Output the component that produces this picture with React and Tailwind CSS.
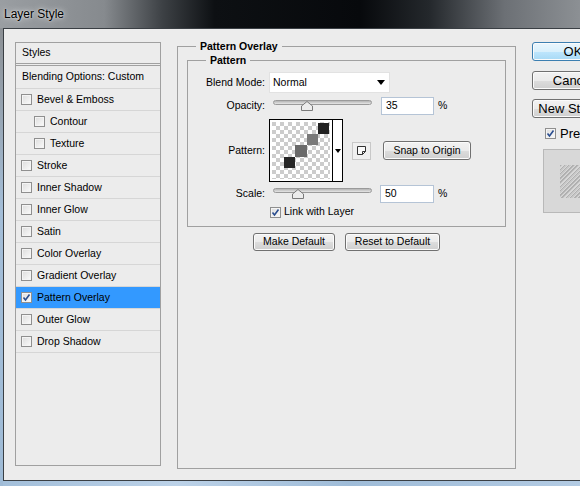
import React from 'react';

const styleRows = [
    { label: 'Bevel & Emboss' },
    { label: 'Contour', indent: true },
    { label: 'Texture', indent: true },
    { label: 'Stroke' },
    { label: 'Inner Shadow' },
    { label: 'Inner Glow' },
    { label: 'Satin' },
    { label: 'Color Overlay' },
    { label: 'Gradient Overlay' },
    { label: 'Pattern Overlay', checked: true, active: true },
    { label: 'Outer Glow' },
    { label: 'Drop Shadow' },
];

function Checkbox({ checked }) {
    return (
        <span className="w-[11px] h-[11px] shrink-0 border border-[#8f8f8f] bg-[linear-gradient(135deg,#dcdcdc,#fbfbfb)] shadow-[inset_0_0_0_1px_#f4f4f4] flex items-center justify-center">
            {checked && (
                <svg width="9" height="9" viewBox="0 0 9 9">
                    <path d="M1.5 4.5 L3.5 7 L7.5 1.5" fill="none" stroke="#2a4d8f" strokeWidth="1.6" />
                </svg>
            )}
        </span>
    );
}

function Button({ children, className = '', primary }) {
    return (
        <div
            className={`flex items-center justify-center rounded-[3px] border ${primary
                ? 'border-[#3c7fb1] bg-[linear-gradient(#eaf6fd_0%,#d9f0fc_50%,#bee6fd_51%,#a7d9f5_100%)]'
                : 'border-[#707070] bg-[linear-gradient(#f2f2f2_0%,#ebebeb_50%,#dddddd_51%,#cfcfcf_100%)]'
                } shadow-[inset_0_0_0_1px_#fbfbfb] ${className}`}
        >
            {children}
        </div>
    );
}

function Slider({ thumb }) {
    return (
        <div className="relative w-[99px] h-[18px] ml-[4px]">
            <div className="mt-[3px] h-[5px] rounded-full border border-[#9a9a9a] bg-[linear-gradient(#b4b4b4,#e6e6e6)]" />
            <svg className="absolute top-[4px]" style={{ left: thumb }} width="12" height="10" viewBox="0 0 12 10">
                <path d="M0.5 9.5 V5 L6 0.5 L11.5 5 V9.5 Z" fill="#ececec" stroke="#7a7a7a" />
            </svg>
        </div>
    );
}

function PatternSwatch() {
    return (
        <svg width="58" height="57" viewBox="0 0 58 57">
            <defs>
                <pattern id="checks" width="8" height="8" patternUnits="userSpaceOnUse">
                    <rect width="8" height="8" fill="#ffffff" />
                    <rect width="4" height="4" fill="#cccccc" />
                    <rect x="4" y="4" width="4" height="4" fill="#cccccc" />
                </pattern>
            </defs>
            <rect width="58" height="57" fill="url(#checks)" />
            <rect x="46" y="1" width="11" height="11" fill="#222222" />
            <rect x="35" y="12" width="11" height="11" fill="#7a7a7a" />
            <rect x="23" y="23" width="12" height="12" fill="#6a6a6a" />
            <rect x="12" y="35" width="11" height="11" fill="#262626" />
        </svg>
    );
}

export default function App() {
    return (
        <div className="w-[580px] h-[486px] overflow-hidden flex flex-col font-['Liberation_Sans',Arial,sans-serif] text-black">
            {/* Title bar */}
            <div className="h-[28px] shrink-0 flex items-center pl-[4px] bg-[linear-gradient(90deg,#9a9ea2_0%,#868a8e_18%,#3d4145_28%,#0d1013_37%,#07090c_62%,#24282c_74%,#6c7075_87%,#8c9094_100%)]">
                <span className="text-[12px] leading-none [text-shadow:0_0_6px_rgba(255,255,255,0.9),0_0_2px_rgba(255,255,255,0.7)]">Layer Style</span>
            </div>

            <div className="flex-1 flex min-w-0">
                <div className="w-[3px] shrink-0 bg-[linear-gradient(#8c9094,#a4bed8_40%,#9fbbd6)]" />
                <div className="flex-1 min-w-0 flex flex-col">
                    <div className="h-[453px] border-t border-l border-b border-[#3a3f44] bg-[#ececec] flex items-start pl-[11px] pt-[11px] overflow-hidden text-[10.5px]">
                        {/* Styles list */}
                        <div className="mt-[2px] w-[146px] h-[424px] shrink-0 border border-[#a0a0a0]">
                            <div className="h-[23px] border-b-[3px] border-double border-[#a0a0a0] pl-[6px] flex items-center">Styles</div>
                            <div className="h-[23px] border-b border-[#d6d6d6] pl-[6px] flex items-center">Blending Options: Custom</div>
                            {styleRows.map((row) => (
                                <div
                                    key={row.label}
                                    className={`h-[22px] border-b border-[#d6d6d6] flex items-center gap-[5px] ${row.indent ? 'pl-[18px]' : 'pl-[5px]'} ${row.active ? 'bg-[#3399ff]' : ''}`}
                                >
                                    <Checkbox checked={row.checked} />
                                    <span>{row.label}</span>
                                </div>
                            ))}
                        </div>

                        {/* Pattern Overlay */}
                        <fieldset className="ml-[16px] w-[339px] h-[429px] shrink-0 border border-[#a0a0a0]">
                            <legend className="ml-[18px] px-[4px] leading-[13px] font-bold">Pattern Overlay</legend>
                            <fieldset className="mt-[1px] mx-[9px] border border-[#a0a0a0] pb-[8px]">
                                <legend className="ml-[18px] px-[4px] leading-[13px] font-bold">Pattern</legend>
                                <div className="mt-[5px] grid grid-cols-[77px_1fr] gap-x-[4px] items-center">
                                    <span className="text-right">Blend Mode:</span>
                                    <div className="w-[121px] h-[21px] bg-white border border-[#e2e2e2] flex items-center justify-between pl-[3px] pr-[4px]">
                                        <span>Normal</span>
                                        <svg width="8" height="5" viewBox="0 0 8 5"><path d="M0 0 H8 L4 5 Z" fill="#000" /></svg>
                                    </div>
                                </div>
                                <div className="mt-[4px] grid grid-cols-[77px_1fr] gap-x-[4px] items-center">
                                    <span className="text-right">Opacity:</span>
                                    <div className="flex items-center">
                                        <Slider thumb={28} />
                                        <div className="ml-[9px] w-[53px] h-[18px] bg-white border border-[#b5c4d6] pl-[4px] flex items-center">35</div>
                                        <span className="ml-[4px]">%</span>
                                    </div>
                                </div>
                                <div className="mt-[4px] grid grid-cols-[77px_1fr] gap-x-[4px] items-center">
                                    <span className="text-right">Pattern:</span>
                                    <div className="flex items-center">
                                        <div className="w-[74px] h-[63px] border border-black bg-white flex">
                                            <div className="p-[2px]"><PatternSwatch /></div>
                                            <div className="flex-1 border-l border-black flex items-center justify-center">
                                                <svg width="6" height="4" viewBox="0 0 6 4"><path d="M0 0 H6 L3 4 Z" fill="#000" /></svg>
                                            </div>
                                        </div>
                                        <div className="ml-[9px] w-[19px] h-[18px] border border-[#c8c8c8] bg-[#f0f0f0] flex items-center justify-center">
                                            <svg width="11" height="11" viewBox="0 0 11 11">
                                                <path d="M1.5 1.5 H9.5 V6.5 L6.5 9.5 H1.5 Z M6.5 9.5 V6.5 H9.5" fill="#fafafa" stroke="#333" />
                                            </svg>
                                        </div>
                                        <Button className="ml-[12px] w-[88px] h-[19px]">Snap to Origin</Button>
                                    </div>
                                </div>
                                <div className="mt-[3px] grid grid-cols-[77px_1fr] gap-x-[4px] items-center">
                                    <span className="text-right">Scale:</span>
                                    <div className="flex items-center">
                                        <Slider thumb={19} />
                                        <div className="ml-[8px] w-[54px] h-[18px] bg-white border border-[#b5c4d6] pl-[4px] flex items-center">50</div>
                                        <span className="ml-[4px]">%</span>
                                    </div>
                                </div>
                                <div className="mt-[3px] grid grid-cols-[77px_1fr] gap-x-[4px] items-center">
                                    <span />
                                    <div className="flex items-center h-[12px] pl-[1px] gap-[3px]">
                                        <Checkbox checked />
                                        <span>Link with Layer</span>
                                    </div>
                                </div>
                            </fieldset>
                            <div className="mt-[6px] flex justify-center gap-[10px]">
                                <Button className="w-[82px] h-[18px]">Make Default</Button>
                                <Button className="w-[95px] h-[18px]">Reset to Default</Button>
                            </div>
                        </fieldset>

                        {/* Right column */}
                        <div className="mt-[2px] ml-[16px] w-[82px] shrink-0 flex flex-col text-[13px]">
                            <Button primary className="h-[19px]">OK</Button>
                            <Button className="mt-[10px] h-[19px]">Cancel</Button>
                            <Button className="mt-[9px] h-[19px] whitespace-nowrap">New Style...</Button>
                            <div className="mt-[10px] ml-[13px] flex items-center gap-[4px] h-[11px]">
                                <Checkbox checked />
                                <span>Preview</span>
                            </div>
                            <div className="mt-[10px] ml-[11px] w-[64px] h-[64px] border border-[#b8b8b8] bg-[#d8d8d8] pl-[16px] pt-[15px]">
                                <div className="w-[40px] h-[33px] bg-[repeating-linear-gradient(135deg,#b0b0b0_0_1px,#c8c8c8_1px_2px,transparent_2px_3px)]" />
                            </div>
                        </div>
                    </div>
                    <div className="flex-1 bg-[linear-gradient(90deg,#a3bfda,#bcd2e8_30%,#9fbcd8_60%,#b3cbe3)]" />
                </div>
            </div>
        </div>
    );
}
